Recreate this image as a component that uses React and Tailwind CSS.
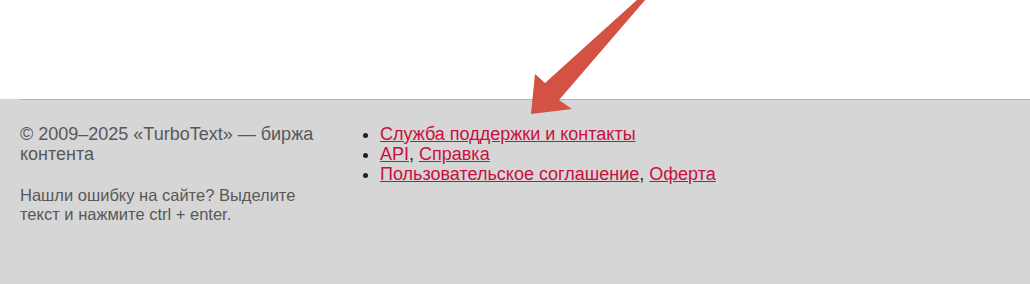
export default function App() {
  return (
    <div className="relative w-[1030px] h-[284px] bg-white overflow-hidden" style={{ fontFamily: '"Liberation Sans", Arial, sans-serif' }}>
      <div className="h-[99px]" />
      <div className="bg-[#d6d6d6] h-[185px]">
        <div className="ml-5 border-t border-[#b3b3b3] flex pt-[24px] text-[18px] leading-[20px] text-[#585858]">
          <div className="w-[320px]">
            <div className="w-[305px]">
              <p>© 2009–2025 «TurboText» — биржа контента</p>
              <p className="mt-[22px] text-[16.5px] leading-[18.5px]">Нашли ошибку на сайте? Выделите текст и нажмите ctrl + enter.</p>
            </div>
          </div>
          <ul className="list-disc pl-10 text-[#222]">
            <li><a href="#" className="underline text-[#c8103f]">Служба поддержки и контакты</a></li>
            <li><a href="#" className="underline text-[#c8103f]">API</a>, <a href="#" className="underline text-[#c8103f]">Справка</a></li>
            <li><a href="#" className="underline text-[#c8103f]">Пользовательское соглашение</a>, <a href="#" className="underline text-[#c8103f]">Оферта</a></li>
          </ul>
        </div>
      </div>
      <svg className="absolute left-0 top-0 pointer-events-none" width="1030" height="284">
        <polygon points="638,-1 646,-1 559,100 572,109 531,114 535,74 545,83" fill="#d35244" />
      </svg>
    </div>
  );
}
